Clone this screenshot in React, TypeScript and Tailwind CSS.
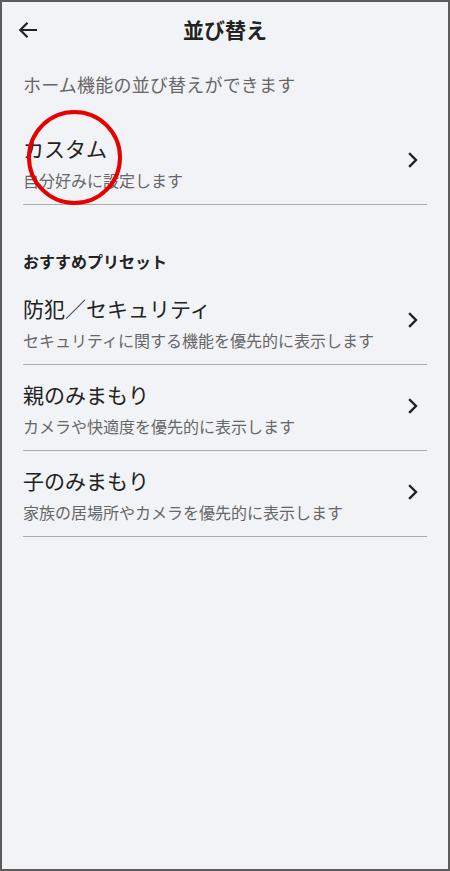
import React from 'react';

const font = { fontFamily: '"Noto Sans CJK JP", "Noto Sans", sans-serif' };

const presets = [
  { title: '防犯／セキュリティ', desc: 'セキュリティに関する機能を優先的に表示します' },
  { title: '親のみまもり', desc: 'カメラや快適度を優先的に表示します' },
  { title: '子のみまもり', desc: '家族の居場所やカメラを優先的に表示します' },
];

function Chevron() {
  return (
    <svg width="12" height="18" viewBox="0 0 12 18" fill="none" className="shrink-0 mr-[8px] mb-[6px]">
      <path d="M3 3 L9 9 L3 15" stroke="#222" strokeWidth="2.4" strokeLinecap="square" strokeLinejoin="miter" />
    </svg>
  );
}

function Row({ title, desc }: { title: string; desc: string }) {
  return (
    <div className="flex items-center border-b border-[#ababab] pt-[15px] pb-[12px]">
      <div className="flex-1 min-w-0">
        <div className="text-[21px] leading-[28px] text-[#222]">{title}</div>
        <div className="mt-[6px] text-[16px] leading-[24px] text-[#666]">{desc}</div>
      </div>
      <Chevron />
    </div>
  );
}

export default function App() {
  return (
    <div style={font} className="relative w-[450px] h-[871px] box-border border-2 border-[#5c5c5c] bg-[#f2f3f7] overflow-hidden">
      {/* header */}
      <div className="relative h-[56px] flex items-center justify-center">
        <svg width="20" height="18" viewBox="0 0 20 18" fill="none" className="absolute left-[16px] top-[19px]">
          <path d="M19 9 H2.5 M9.5 1.8 L2.3 9 L9.5 16.2" stroke="#222" strokeWidth="2.2" />
        </svg>
        <div className="text-[21px] font-bold text-[#222]">並び替え</div>
      </div>

      <div className="px-[21px]">
        <div className="mt-[14px] text-[18px] leading-[24px] text-[#666] tracking-[0.2px]">ホーム機能の並び替えができます</div>

        <div className="mt-[23px]">
          <Row title="カスタム" desc="自分好みに設定します" />
        </div>

        <div className="mt-[44px] text-[16px] leading-[24px] font-bold text-[#222]">おすすめプリセット</div>

        <div className="mt-[6px]">
          {presets.map((p) => (
            <Row key={p.title} title={p.title} desc={p.desc} />
          ))}
        </div>
      </div>

      {/* annotation circle */}
      <div className="absolute left-[25px] top-[108px] w-[95px] h-[95px] rounded-full border-[4px] border-[#e60000] pointer-events-none" />
    </div>
  );
}
